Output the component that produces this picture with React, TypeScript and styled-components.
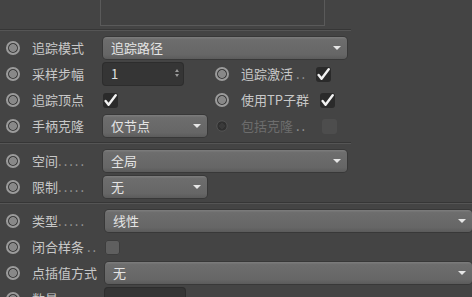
import { FC, ReactNode } from 'react';
import styled, { createGlobalStyle } from 'styled-components';

const GlobalStyle = createGlobalStyle`
  html, body {
    margin: 0;
    padding: 0;
    background: #444444;
    overflow: hidden;
  }

  body {
    font-family: "Noto Sans CJK SC", "Noto Sans", "Liberation Sans", sans-serif;
    font-size: 13px;
    color: #c8c8c8;
  }
`;

const Root = styled.div`
  width: 472px;
  height: 297px;
  display: flex;
  flex-direction: column;
  overflow: hidden;
`;

const PreviewArea = styled.div`
  height: 26px;
  padding-left: 100px;
  flex-shrink: 0;
`;

const PreviewBox = styled.div`
  width: 223px;
  height: 25px;
  border: 1px solid #5a5a5a;
  border-top: none;
  background: #424242;
`;

const Divider = styled.div<{ $full?: boolean }>`
  flex-shrink: 0;
  width: ${({ $full }) => ($full ? '100%' : '351px')};
  height: 1px;
  background: #363636;
  border-bottom: 1px solid #555555;
  margin-top: ${({ $full }) => ($full ? '2px' : '3px')};
`;

const Section = styled.div<{ $full?: boolean }>`
  flex-shrink: 0;
  width: ${({ $full }) => ($full ? '100%' : '351px')};
  padding-top: 4px;
  display: flex;
  flex-direction: column;
`;

const Row = styled.div`
  height: 26px;
  display: flex;
  align-items: center;
`;

const Field = styled.div<{ $width?: number }>`
  display: flex;
  align-items: center;
  height: 100%;
  ${({ $width }) => ($width ? `width: ${$width}px;` : 'flex: 1; min-width: 0;')}
  padding-left: 6px;
  box-sizing: border-box;

  & + & {
    padding-left: 0;
  }
`;

const Radio = styled.span<{ $dim?: boolean }>`
  flex-shrink: 0;
  box-sizing: border-box;
  width: 14px;
  height: 14px;
  border-radius: 50%;
  margin-right: 12px;
  border: ${({ $dim }) => ($dim ? '1px solid #575757' : '2px solid #9b9b9b')};
  background: ${({ $dim }) =>
    $dim
      ? 'radial-gradient(circle, #3a3a3a 0 3.5px, #303030 3.5px)'
      : 'radial-gradient(circle, #888888 0 3.6px, #3c3c3c 4.2px)'};
  transform: ${({ $dim }) => ($dim ? 'scale(0.8)' : 'none')};
`;

const Label = styled.span<{ $width: number; $dim?: boolean }>`
  flex-shrink: 0;
  width: ${({ $width }) => $width}px;
  white-space: nowrap;
  overflow: hidden;
  color: ${({ $dim }) => ($dim ? '#6d6d6d' : '#c8c8c8')};
  line-height: 26px;
`;

const Leader = styled.span`
  letter-spacing: 2px;
  color: #9a9a9a;
`;

const Dropdown = styled.div<{ $width?: number }>`
  position: relative;
  height: 22px;
  ${({ $width }) => ($width ? `width: ${$width}px;` : 'flex: 1;')}
  box-sizing: border-box;
  padding-left: 8px;
  border-radius: 4px;
  background: linear-gradient(to bottom, #7d7d7d 0, #6d6d6d 12%, #666666 80%, #5b5b5b 100%);
  box-shadow: 0 0 0 1px #383838;
  color: #e4e4e4;
  line-height: 22px;
  white-space: nowrap;
`;

const Arrow = styled.span`
  position: absolute;
  right: 6px;
  top: 9px;
  width: 0;
  height: 0;
  border-left: 4px solid transparent;
  border-right: 4px solid transparent;
  border-top: 4px solid #e6e6e6;
`;

const NumberBox = styled.div<{ $width: number }>`
  position: relative;
  width: ${({ $width }) => $width}px;
  height: 22px;
  box-sizing: border-box;
  padding-left: 8px;
  border-radius: 3px;
  background: #353535;
  box-shadow: 0 0 0 1px #2d2d2d;
  color: #e0e0e0;
  line-height: 22px;
`;

const Spinner = styled.span`
  position: absolute;
  right: 4px;
  top: 6px;
  display: flex;
  flex-direction: column;
  gap: 2px;

  &::before,
  &::after {
    content: '';
    width: 0;
    height: 0;
    border-left: 2.5px solid transparent;
    border-right: 2.5px solid transparent;
  }

  &::before {
    border-bottom: 3px solid #9a9a9a;
  }

  &::after {
    border-top: 3px solid #9a9a9a;
  }
`;

const Box = styled.span<{ $state: 'on' | 'off' | 'dim' }>`
  flex-shrink: 0;
  width: 15px;
  height: 15px;
  border-radius: 3px;
  display: flex;
  align-items: center;
  justify-content: center;
  background: ${({ $state }) =>
    $state === 'on' ? '#2a2a2a' : $state === 'off' ? '#5f5f5f' : '#4d4d4d'};
  box-shadow: ${({ $state }) =>
    $state === 'off' ? 'inset 0 0 0 1px #3d3d3d' : 'none'};
`;

const Check: FC<{ on?: boolean; dim?: boolean }> = ({ on, dim }) => (
  <Box $state={on ? 'on' : dim ? 'dim' : 'off'}>
    {on && (
      <svg width="13" height="13" viewBox="0 0 12 12">
        <path
          d="M1.5 6.5 L4.2 10 L10.8 1.2"
          fill="none"
          stroke="#f2f2f2"
          strokeWidth="2.2"
          strokeLinecap="round"
          strokeLinejoin="round"
        />
      </svg>
    )}
  </Box>
);

const Select: FC<{ value: string; width?: number }> = ({ value, width }) => (
  <Dropdown $width={width}>
    {value}
    <Arrow />
  </Dropdown>
);

interface ItemProps {
  label: ReactNode;
  labelWidth?: number;
  width?: number;
  dim?: boolean;
  children?: ReactNode;
}

const Item: FC<ItemProps> = ({ label, labelWidth = 71, width, dim, children }) => (
  <Field $width={width}>
    <Radio $dim={dim} />
    <Label $width={labelWidth} $dim={dim}>
      {label}
    </Label>
    {children}
  </Field>
);

const App: FC = () => {
  return (
    <Root>
      <GlobalStyle />

      {/* Preview */}
      <PreviewArea>
        <PreviewBox />
      </PreviewArea>
      <Divider />

      {/* Tracing */}
      <Section>
        <Row>
          <Item label="追踪模式">
            <Select value="追踪路径" width={244} />
          </Item>
        </Row>
        <Row>
          <Item label="采样步幅" width={215}>
            <NumberBox $width={80}>
              1
              <Spinner />
            </NumberBox>
          </Item>
          <Item label={<>追踪激活 <Leader>..</Leader></>} labelWidth={75} width={131}>
            <Check on />
          </Item>
        </Row>
        <Row>
          <Item label="追踪顶点" width={215}>
            <Check on />
          </Item>
          <Item label="使用TP子群" labelWidth={79} width={131}>
            <Check on />
          </Item>
        </Row>
        <Row>
          <Item label="手柄克隆" width={215}>
            <Select value="仅节点" width={104} />
          </Item>
          <Item label={<>包括克隆 <Leader>..</Leader></>} labelWidth={81} width={131} dim>
            <Check dim />
          </Item>
        </Row>
      </Section>
      <Divider />

      {/* Space */}
      <Section>
        <Row>
          <Item label={<>空间<Leader>.....</Leader></>}>
            <Select value="全局" width={244} />
          </Item>
        </Row>
        <Row>
          <Item label={<>限制<Leader>.....</Leader></>}>
            <Select value="无" width={104} />
          </Item>
        </Row>
      </Section>
      <Divider $full />

      {/* Spline */}
      <Section $full>
        <Row>
          <Item label={<>类型<Leader>.....</Leader></>} labelWidth={73}>
            <Select value="线性" />
          </Item>
        </Row>
        <Row>
          <Item label={<>闭合样条 <Leader>..</Leader></>} labelWidth={73}>
            <Check />
          </Item>
        </Row>
        <Row>
          <Item label="点插值方式" labelWidth={73}>
            <Select value="无" />
          </Item>
        </Row>
        <Row>
          <Item label="数量" labelWidth={73}>
            <NumberBox $width={80} />
          </Item>
        </Row>
      </Section>
    </Root>
  );
};

export default App;
